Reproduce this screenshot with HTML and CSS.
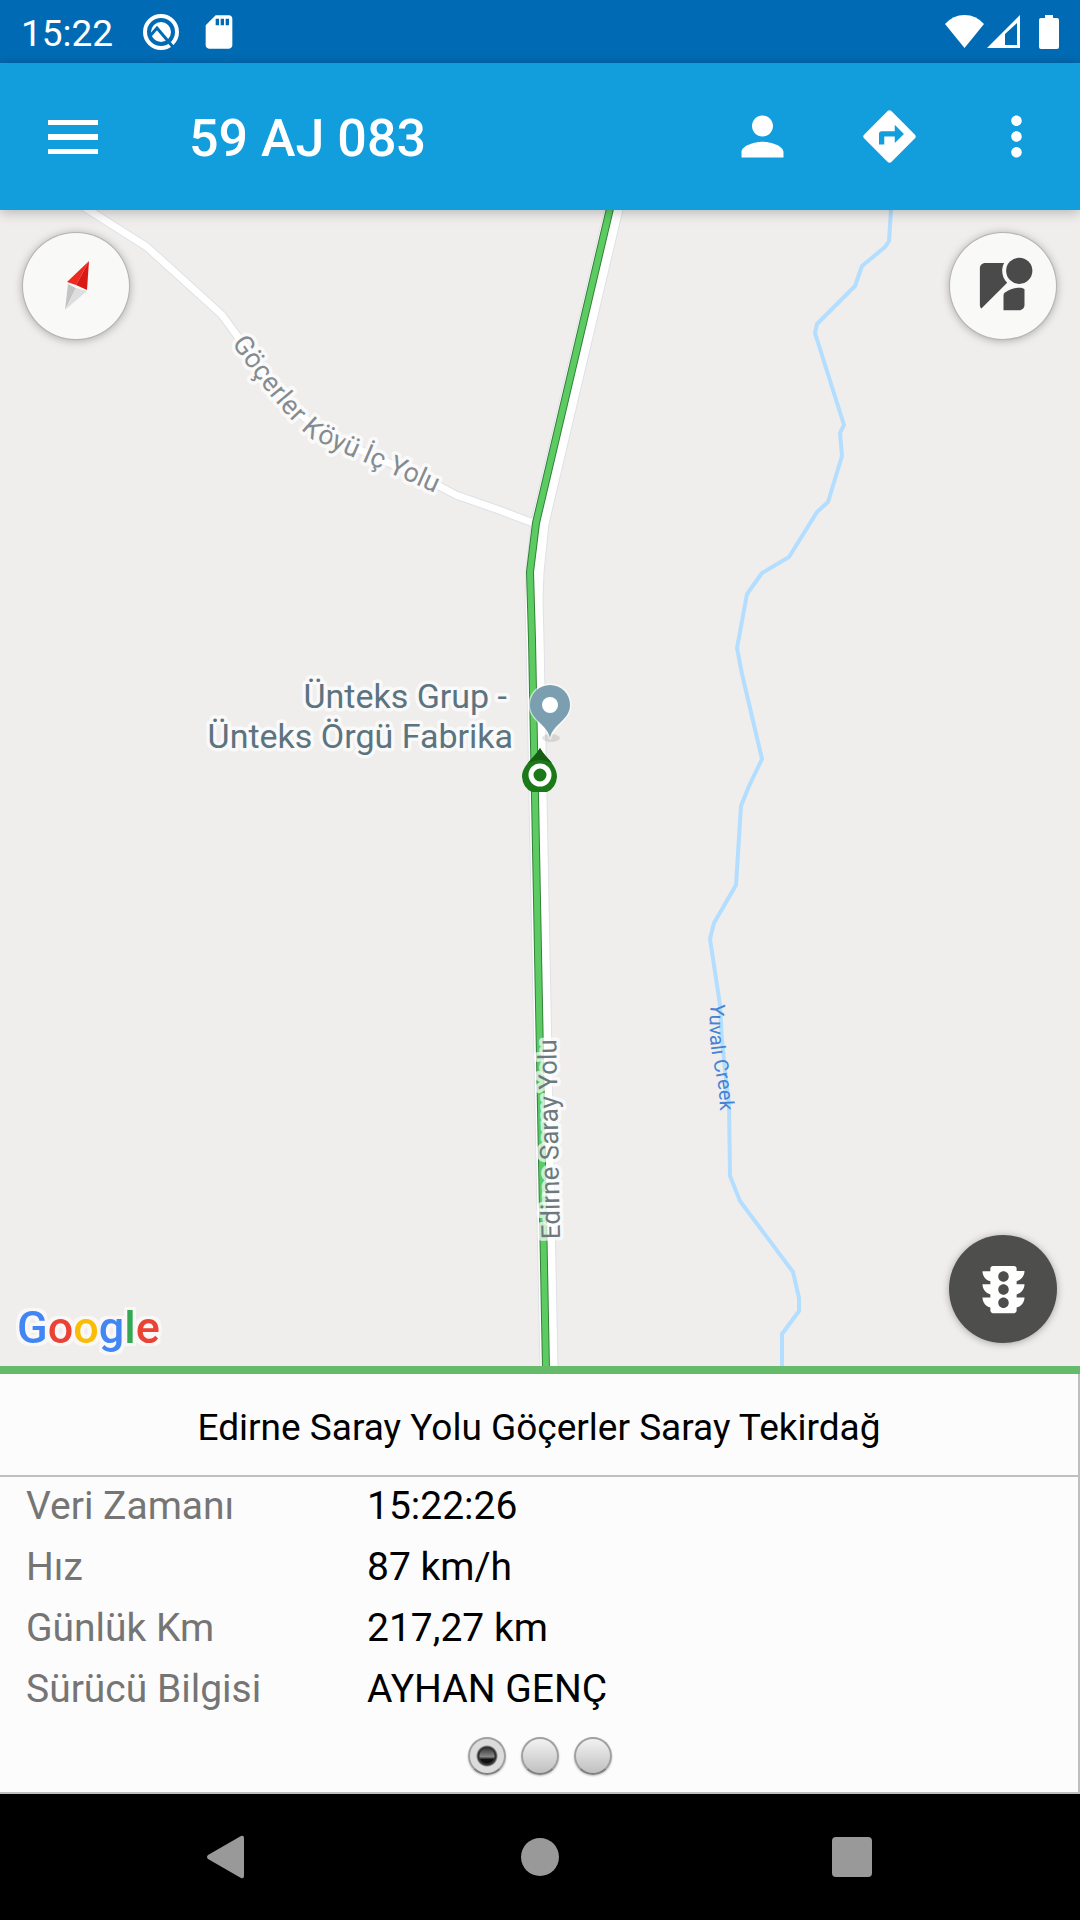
FILE: index.html
```html
<!DOCTYPE html>
<html lang="tr">

<head>
    <meta charset="UTF-8">
    <meta name="viewport" content="width=device-width, initial-scale=1.0">
    <title>59 AJ 083</title>
    <link rel="stylesheet" href="styles.css">
</head>

<body>
    <!-- Status bar -->
    <div class="status-bar">
        <span class="clock">15:22</span>
        <svg class="status-q" viewBox="0 0 36 38">
            <circle cx="18" cy="19" r="16" fill="none" stroke="#fff" stroke-width="4" />
            <circle cx="18" cy="19" r="10" fill="#fff" />
            <path d="M7 23L14 15L30 34" fill="none" stroke="#006bb4" stroke-width="3" />
        </svg>
        <svg class="status-sd" viewBox="0 0 24 24">
            <path fill="#fff" d="M18 2h-8L4.02 8 4 20c0 1.1.9 2 2 2h12c1.1 0 2-.9 2-2V4c0-1.1-.9-2-2-2zm-6 6h-2V4h2v4zm3 0h-2V4h2v4zm3 0h-2V4h2v4z" />
        </svg>
        <svg class="status-right" viewBox="0 0 116 36">
            <path fill="#fff" d="M0 10Q8 1 19.500 1Q31 1 39 10L19.500 34z" />
            <path fill="#fff" fill-rule="evenodd" d="M42 34L75 1V34zM60 20V31H72V9z" />
            <path fill="#fff" d="M100 1h8v3h4q2 0 2 2v27q0 2-2 2H96q-2 0-2-2V6q0-2 2-2h4z" />
        </svg>
    </div>

    <!-- Toolbar -->
    <header class="toolbar">
        <button class="menu-button" aria-label="Menü">
            <svg class="menu-icon" viewBox="0 0 50 34">
                <path fill="#fff" d="M0 0h50v5H0zM0 14h50v6H0zM0 29h50v5H0z" />
            </svg>
        </button>
        <h1>59 AJ 083</h1>
        <button class="action" aria-label="Sürücü">
            <svg class="icon" viewBox="0 0 24 24">
                <path d="M12 12c2.210 0 4-1.790 4-4s-1.790-4-4-4-4 1.790-4 4 1.790 4 4 4zm0 2c-2.670 0-8 1.340-8 4v2h16v-2c0-2.660-5.330-4-8-4z" />
            </svg>
        </button>
        <button class="action" aria-label="Yol tarifi">
            <svg class="icon" viewBox="0 0 24 24">
                <path d="M21.710 11.290l-9-9c-.39-.39-1.020-.39-1.410 0l-9 9c-.39.39-.39 1.020 0 1.410l9 9c.39.39 1.020.39 1.410 0l9-9c.39-.38.39-1.010 0-1.410zM14 14.500V12h-4v3H8v-4c0-.55.45-1 1-1h5V7.500l3.500 3.500-3.500 3.500z" />
            </svg>
        </button>
        <button class="action" aria-label="Diğer">
            <svg class="icon" viewBox="0 0 24 24">
                <path d="M12 8c1.100 0 2-.9 2-2s-.9-2-2-2-2 .9-2 2 .9 2 2 2zm0 2c-1.100 0-2 .9-2 2s.9 2 2 2 2-.9 2-2-.9-2-2-2zm0 6c-1.100 0-2 .9-2 2s.9 2 2 2 2-.9 2-2-.9-2-2-2z" />
            </svg>
        </button>
    </header>

    <!-- Map -->
    <main class="map">
        <svg class="map-canvas" viewBox="0 210 1080 1156" preserveAspectRatio="xMidYMid slice">
            <defs>
                <path id="village-road" d="M84 207L147 247L222 315L238 337C262 372 290 408 318 429C350 448 400 466 441 487L456 495L499 510L536 524" />
                <path id="village-label" d="M239 338C262 371 286 404 314 429C350 448 400 466 460 495" />
                <path id="main-label" d="M560 1239L556 1030" />
                <path id="creek-label" d="M711 1003C708 1025 710 1048 715 1070S719 1095 721 1130" />
            </defs>

            <path class="creek" d="M891 210L889 241L885 247L862 266L855 286L817 324L815 333L844 425L840 433L842 456L828 502L817 512L789 557L762 573L747 594L737 648L742 674L762 759L749 786L741 806L736 885L714 923L710 939L720 1005L722 1040L725 1070L729 1104L730 1176L740 1201L793 1272L799 1298V1311L782 1334V1366" />

            <use href="#village-road" class="road-edge small" />
            <path class="road-edge" d="M616 200L540 523L535 572L534 600L535 640L549 1370" />
            <use href="#village-road" class="road small" />
            <path class="road" d="M616 200L540 523L535 572L534 600L535 640L549 1370" />

            <!-- Travelled route -->
            <path class="route-edge" d="M612 200L536 523L530 572L532 640L546 1370" />
            <path class="route" d="M612 200L536 523L530 572L532 640L546 1370" />

            <text class="road-label" dy="9"><textPath href="#village-label">Göçerler Köyü İç Yolu</textPath></text>
            <text class="road-label main"><textPath href="#main-label">Edirne Saray Yolu</textPath></text>
            <text class="creek-label"><textPath href="#creek-label">Yuvalı Creek</textPath></text>

            <text class="place-label" x="507" y="708">Ünteks Grup -</text>
            <text class="place-label" x="513" y="748">Ünteks Örgü Fabrika</text>

            <ellipse cx="551" cy="738" rx="9" ry="4" fill="#000" opacity=".1" />
            <path d="M550 738C548 725 530 720 530 705A20 20 0 0 1 570 705C570 720 552 725 550 738z" fill="#7b9eb0" stroke="#fff" stroke-opacity=".6" stroke-width="3" paint-order="stroke" />
            <circle cx="550" cy="705" r="8" fill="#fff" />

            <path d="M540 748C534 758 522 765 522 777Q523 788 532 792H547Q556 788 557 777C557 765 546 758 540 748z" fill="#1b7a17" />
            <path d="M540 748C537 754 532 758 528 763Q540 757 552 763C548 758 543 754 540 748z" fill="#155e13" />
            <circle cx="540" cy="775" r="9" fill="#1b7a17" stroke="#fff" stroke-width="5" />

            <text class="google" x="17" y="1343"><tspan fill="#4285f4">G</tspan><tspan fill="#ea4335">o</tspan><tspan fill="#fbbc05">o</tspan><tspan fill="#4285f4">g</tspan><tspan fill="#34a853">l</tspan><tspan fill="#ea4335">e</tspan></text>
        </svg>

        <button class="map-button compass" aria-label="Pusula">
            <svg class="icon" viewBox="0 0 63 63">
                <path fill="#c4c4c4" d="M23 29L20 55L31 33z" />
                <path fill="#dedede" d="M31 33L20 55L42 36z" />
                <path fill="#f0281f" d="M44 6L22 27L31 30z" />
                <path fill="#d91a14" d="M44 6L31 30L42 35z" />
            </svg>
        </button>
        <button class="map-button street-view" aria-label="Sokak görünümü">
            <svg class="icon" viewBox="0 0 24 24">
                <path d="M12.560 14.330c-.34.27-.56.7-.56 1.170V21h6c1.100 0 2-.9 2-2v-5.980c-.6-.33-1.200-.52-2-.52-2.030 0-3.930.7-5.440 1.830z" />
                <circle cx="18" cy="6" r="5" />
                <path d="M11.500 6c0-1.080.27-2.100.74-3H5c-1.100 0-2 .9-2 2v14c0 .55.23 1.050.59 1.410l9.820-9.820C12.230 9.420 11.500 7.800 11.500 6z" />
            </svg>
        </button>
        <button class="map-button traffic" aria-label="Trafik">
            <svg class="icon" viewBox="0 0 24 24">
                <path d="M20 10h-3V8.860c1.720-.45 3-2 3-3.860h-3V4c0-.55-.45-1-1-1H8c-.55 0-1 .45-1 1v1H4c0 1.860 1.280 3.410 3 3.860V10H4c0 1.860 1.280 3.410 3 3.860V15H4c0 1.860 1.280 3.410 3 3.860V20c0 .55.45 1 1 1h8c.55 0 1-.45 1-1v-1.140c1.720-.45 3-2 3-3.860h-3v-1.140c1.720-.45 3-2 3-3.860zm-8 9c-1.110 0-2-.9-2-2s.89-2 2-2c1.100 0 2 .9 2 2s-.89 2-2 2zm0-5c-1.110 0-2-.9-2-2s.89-2 2-2c1.100 0 2 .9 2 2s-.89 2-2 2zm0-5c-1.110 0-2-.9-2-2 0-1.110.89-2 2-2 1.100 0 2 .89 2 2 0 1.100-.89 2-2 2z" />
            </svg>
        </button>
    </main>

    <!-- Vehicle details -->
    <section class="details">
        <div class="details-body">
            <p class="address">Edirne Saray Yolu Göçerler Saray Tekirdağ</p>
            <dl class="info">
                <dt>Veri Zamanı</dt>
                <dd>15:22:26</dd>
                <dt>Hız</dt>
                <dd>87 km/h</dd>
                <dt>Günlük Km</dt>
                <dd>217,27 km</dd>
                <dt>Sürücü Bilgisi</dt>
                <dd>AYHAN GENÇ</dd>
            </dl>
            <div class="pager">
                <input type="radio" name="page" aria-label="Sayfa 1" checked>
                <input type="radio" name="page" aria-label="Sayfa 2">
                <input type="radio" name="page" aria-label="Sayfa 3">
            </div>
        </div>
    </section>

    <!-- Navigation bar -->
    <nav class="nav-bar">
        <button aria-label="Geri">
            <svg viewBox="0 0 44 44"><path d="M2 20L35 1Q38 0 38 3V41Q38 44 35 43L2 24Q0 22 2 20z" /></svg>
        </button>
        <button aria-label="Ana ekran">
            <svg viewBox="0 0 44 44"><circle cx="22" cy="22" r="19" /></svg>
        </button>
        <button aria-label="Son uygulamalar">
            <svg viewBox="0 0 44 44"><rect x="2" y="2" width="40" height="40" rx="4" /></svg>
        </button>
    </nav>
</body>

</html>
```
FILE: styles.css
```css
* {
    box-sizing: border-box;
}

body {
    font-family: Roboto, "Liberation Sans", sans-serif;
    margin: 0;
    display: flex;
    flex-direction: column;
    min-height: 100vh;
    background-color: #000;
}

button {
    border: none;
    padding: 0;
    background: none;
    cursor: pointer;
    display: flex;
    align-items: center;
    justify-content: center;
}

/* Status bar */
.status-bar {
    display: flex;
    align-items: center;
    height: 63px;
    padding: 0 19px 0 21px;
    background-color: #006bb4;
    color: white;
}

.clock {
    font-size: 37px;
    line-height: 44px;
    padding-top: 4px;
}

.status-q {
    width: 36px;
    height: 38px;
    margin-left: 30px;
}

.status-sd {
    width: 40px;
    height: 40px;
    margin-left: 20px;
}

.status-right {
    width: 116px;
    height: 36px;
    margin-left: auto;
}

/* Toolbar */
.toolbar {
    position: relative;
    z-index: 1;
    display: flex;
    align-items: center;
    height: 147px;
    background-color: #129ddc;
    color: white;
    box-shadow: 0 2px 12px rgba(0, 0, 0, 0.25);
}

.menu-button {
    width: 146px;
    height: 147px;
}

.menu-icon {
    width: 50px;
    height: 34px;
}

h1 {
    flex: 1;
    margin: 0;
    padding: 5px 0 0 43px;
    font-size: 52px;
    line-height: 60px;
    font-weight: 500;
}

.action {
    width: 127px;
    height: 147px;
    color: white;
}

.icon {
    width: 63px;
    height: 63px;
    fill: currentColor;
}

/* Map */
.map {
    position: relative;
    flex: 1;
    background-color: #efeeec;
    overflow: hidden;
}

.map-canvas {
    position: absolute;
    top: 0;
    left: 0;
    width: 100%;
    height: 100%;
}

.map-canvas path {
    stroke-linejoin: round;
}

.creek {
    fill: none;
    stroke: #b3deff;
    stroke-width: 4px;
}

.road-edge {
    fill: none;
    stroke: #dfe1e6;
    stroke-width: 19px;
}

.road {
    fill: none;
    stroke: white;
    stroke-width: 17px;
}

.road-edge.small {
    stroke-width: 9px;
}

.road.small {
    stroke-width: 7px;
}

.route-edge {
    fill: none;
    stroke: #348038;
    stroke-width: 8px;
}

.route {
    fill: none;
    stroke: #5ccb62;
    stroke-width: 6px;
}

.map-canvas text {
    paint-order: stroke;
    stroke: rgba(255, 255, 255, 0.7);
    stroke-width: 7px;
    stroke-linejoin: round;
}

.road-label {
    font-size: 27px;
    fill: #858b90;
}

.road-label.main {
    font-size: 26px;
    fill: #6b787d;
}

.map-canvas .creek-label {
    font-size: 20px;
    fill: #4583d5;
    stroke: none;
}

.place-label {
    font-size: 34px;
    fill: #5b7480;
    text-anchor: end;
}

/* The halo is a filter so that one letter's outline does not cover the next */
.map-canvas .google {
    font-size: 45px;
    font-weight: 500;
    stroke: none;
    filter: drop-shadow(3px 0 0 #f9f8f7) drop-shadow(-3px 0 0 #f9f8f7) drop-shadow(0 3px 0 #f9f8f7) drop-shadow(0 -3px 0 #f9f8f7);
}

.map-button {
    position: absolute;
    width: 106px;
    height: 106px;
    border-radius: 50%;
    background-color: #f9faf8;
    color: #4a4a4a;
    box-shadow: 0 0 0 1px #b4b4b2, 0 1px 10px rgba(0, 0, 0, 0.35);
}

.compass {
    top: 23px;
    left: 23px;
}

.street-view {
    top: 23px;
    right: 24px;
}

.traffic {
    right: 24px;
    bottom: 24px;
    background-color: #4e4e4c;
    color: white;
    box-shadow: 0 0 0 1px #4e4e4c, 0 1px 8px rgba(0, 0, 0, 0.4);
}

/* Vehicle details */
.details {
    border-top: 8px solid #66bb6a;
    background-color: #fcfcfc;
}

.details-body {
    border-right: 2px solid #bfbfbf;
    border-bottom: 2px solid #bfbfbf;
}

.address {
    margin: 0;
    padding: 32px 0 25px;
    border-bottom: 2px solid #bfbfbf;
    font-size: 37px;
    line-height: 44px;
    text-align: center;
    color: black;
}

.info {
    display: grid;
    grid-template-columns: 341px 1fr;
    row-gap: 4px;
    margin: 0;
    padding: 1px 26px 0;
    font-size: 39px;
    line-height: 57px;
}

.info dt {
    color: #757575;
}

.info dd {
    margin: 0;
    color: black;
}

.pager {
    display: flex;
    justify-content: center;
    gap: 15px;
    padding: 19px 0 17px 2px;
}

.pager input {
    appearance: none;
    width: 38px;
    height: 38px;
    margin: 0;
    border: 2px solid #a0a0a0;
    border-bottom-color: #808080;
    border-radius: 50%;
    background: linear-gradient(#f2f2f2, #c0c0c0);
    box-shadow: 0 1px 2px rgba(0, 0, 0, 0.25);
}

.pager input:checked {
    background: radial-gradient(circle, transparent 7px, #333 8px, #333 9px, #dcdcdc 11px), linear-gradient(#444 30%, #888 52%, #111 60%);
}

/* Navigation bar */
.nav-bar {
    display: flex;
    justify-content: center;
    height: 126px;
    background-color: black;
}

.nav-bar button {
    width: 312px;
}

.nav-bar svg {
    width: 44px;
    height: 44px;
    fill: #999;
}
```
